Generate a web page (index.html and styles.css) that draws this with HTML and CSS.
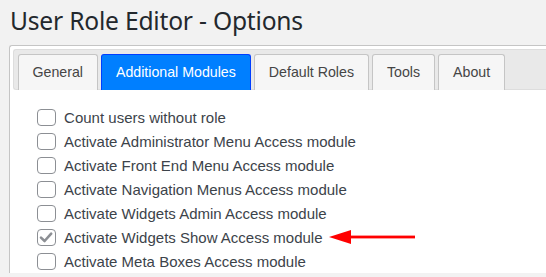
FILE: index.html
```html
<!DOCTYPE html>
<html>
<head>
<meta charset="utf-8">
<link rel="stylesheet" href="styles.css">
</head>
<body>
<div class="wrap">
  <h1 class="title">User Role Editor - Options</h1>
  <div class="tabs">
    <ul class="nav">
      <li class="tab">General</li>
      <li class="tab active">Additional Modules</li>
      <li class="tab">Default Roles</li>
      <li class="tab">Tools</li>
      <li class="tab">About</li>
    </ul>
    <div class="panel">
      <div class="row"><span class="cb"></span><span class="lbl">Count users without role</span></div>
      <div class="row"><span class="cb"></span><span class="lbl">Activate Administrator Menu Access module</span></div>
      <div class="row"><span class="cb"></span><span class="lbl">Activate Front End Menu Access module</span></div>
      <div class="row"><span class="cb"></span><span class="lbl">Activate Navigation Menus Access module</span></div>
      <div class="row"><span class="cb"></span><span class="lbl">Activate Widgets Admin Access module</span></div>
      <div class="row"><span class="cb checked"><svg width="18" height="17" viewBox="0 0 18 17"><path d="M4 8.6 L7.6 12 L14.2 4.6" fill="none" stroke="#8c8f94" stroke-width="2.6" stroke-linecap="round" stroke-linejoin="round"/></svg></span><span class="lbl">Activate Widgets Show Access module</span><svg class="arrow" width="88" height="16" viewBox="0 0 88 16"><polygon points="0,8 22,1 22,15" fill="#ff0000"/><rect x="20" y="6.6" width="66" height="2.8" fill="#ff0000"/></svg></div>
      <div class="row"><span class="cb"></span><span class="lbl">Activate Meta Boxes Access module</span></div>
    </div>
  </div>
</div>
</body>
</html>
```

FILE: styles.css
```css
html, body {
  margin: 0;
  padding: 0;
}
body {
  background: #f2f2f2;
  font-family: "Liberation Sans", Arial, sans-serif;
  color: #333;
  overflow: hidden;
}
.wrap {
  margin-left: 9px;
  padding-top: 5px;
}
.title {
  font-family: "Noto Sans", "Open Sans", sans-serif;
  font-weight: 400;
  font-size: 24.6px;
  line-height: 32px;
  color: #23282d;
  margin: 0 0 8px 1px;
  letter-spacing: -0.2px;
}
.tabs {
  border: 1px solid #c5c5c5;
  border-right: 0;
  border-bottom: 0;
  border-radius: 3px 0 0 0;
  background: #fff;
  padding: 3px 0 0 3px;
}
.nav {
  list-style: none;
  margin: 0;
  display: flex;
  gap: 3.4px;
  background: #e9e9e9;
  border: 1px solid #dddddd;
  border-right: 0;
  border-radius: 3px 0 0 3px;
  padding: 3px 3px 0 3.7px;
}
.tab {
  margin-top: 1px;
  margin-bottom: -1px;
  border: 1px solid #c5c5c5;
  border-bottom: 0;
  border-radius: 3px 3px 0 0;
  background: #f6f6f6;
  color: #454545;
  font-size: 14.2px;
  line-height: 20px;
  padding: 7px 13.8px 8px;
}
.tab.active {
  background: #007fff;
  border-color: #003eff;
  color: #fff;
}
.panel {
  padding: 15px 0 0 24px;
}
.row {
  display: flex;
  align-items: center;
  height: 24px;
}
.cb {
  box-sizing: border-box;
  width: 18.5px;
  height: 17px;
  border: 1px solid #8c8f94;
  border-radius: 4px;
  background: #fff;
  position: relative;
  flex: none;
}
.cb svg {
  position: absolute;
  left: -1px;
  top: -1px;
}
.lbl {
  margin-left: 8.6px;
  font-size: 15px;
  color: #3c434a;
}
.arrow {
  margin-left: 6px;
  flex: none;
}
```
